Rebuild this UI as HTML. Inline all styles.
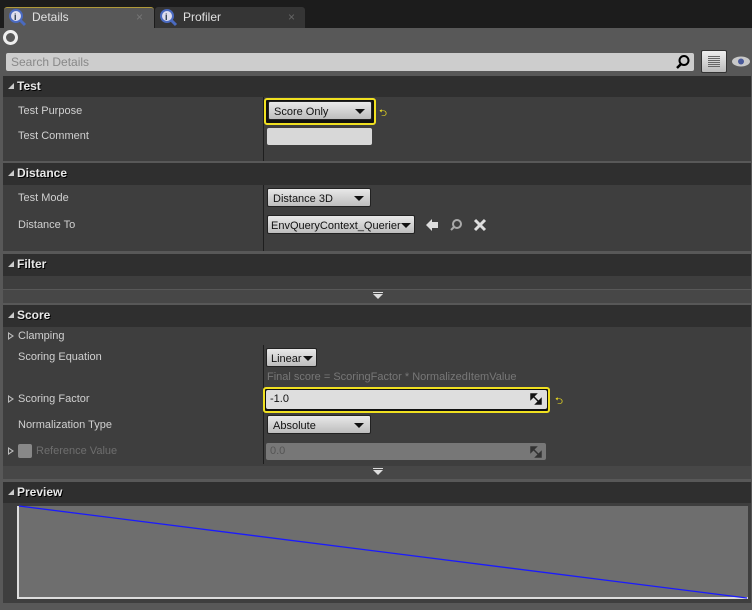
<!DOCTYPE html>
<html><head><style>
*{margin:0;padding:0;box-sizing:border-box}
body{width:752px;height:610px;background:#585858;font-family:"Liberation Sans",sans-serif;font-size:11px;color:#d8d8d8;position:relative;overflow:hidden}
.a{position:absolute}
.hdr{position:absolute;left:3px;right:1px;background:#2f2f2f;color:#e8e8e8;font-weight:bold;font-size:12px;padding-left:14px;line-height:21px;text-shadow:1px 1px 0 #000}
.hdr:before{content:"";position:absolute;left:5px;top:7px;border-left:6px solid transparent;border-bottom:6px solid #ccc}
.bd{position:absolute;left:3px;right:1px;background:#3e3e3e}
.lbl{position:absolute;left:18px;color:#d0d0d0;font-size:11px}
.dd{position:absolute;height:19px;background:linear-gradient(#e8e8e8,#bdbdbd);border:1px solid #222;border-radius:2px;color:#111;font-size:11px;line-height:18px;padding-left:5px;padding-top:1px}
.dd i{position:absolute;right:6px;top:7px;border-left:5px solid transparent;border-right:5px solid transparent;border-top:5px solid #111}
.vl{position:absolute;left:263px;width:1px;background:#1e1e1e}
.exp{position:absolute;left:3px;right:1px;background:#474747}
.exp i{position:absolute;left:370px;top:4px;border-left:5px solid transparent;border-right:5px solid transparent;border-top:5px solid #ddd}
.exp b{position:absolute;left:370px;top:2px;width:10px;height:1px;background:#ddd}
.tri{position:absolute;left:8px;border-top:4px solid transparent;border-bottom:4px solid transparent;border-left:6px solid #bbb}
.tri:after{content:"";position:absolute;left:-5px;top:-2px;border-top:2px solid transparent;border-bottom:2px solid transparent;border-left:3px solid #3e3e3e}
</style></head><body>
<div class="a" style="left:0;top:0;width:752px;height:28px;background:#1c1c1c"></div>
<div class="a" style="left:4px;top:7px;width:150px;height:21px;background:#585858;border-top:1px solid #b09a3a;border-radius:3px 3px 0 0"></div>
<div class="a" style="left:155px;top:7px;width:150px;height:21px;background:#353535;border-radius:3px 3px 0 0"></div>
<svg class="a" style="left:8px;top:8px" width="20" height="20"><circle cx="8" cy="8" r="6" fill="#dde" stroke="#4a6ac0" stroke-width="2"/><line x1="12" y1="12" x2="17" y2="17" stroke="#4a6ac0" stroke-width="3"/><text x="6" y="12" font-size="9" font-weight="bold" fill="#234">i</text></svg>
<svg class="a" style="left:159px;top:8px" width="20" height="20"><circle cx="8" cy="8" r="6" fill="#dde" stroke="#4a6ac0" stroke-width="2"/><line x1="12" y1="12" x2="17" y2="17" stroke="#4a6ac0" stroke-width="3"/><text x="6" y="12" font-size="9" font-weight="bold" fill="#234">i</text></svg>
<div class="a" style="left:32px;top:10px;font-size:12px;color:#e0e0e0">Details</div>
<div class="a" style="left:183px;top:10px;font-size:12px;color:#e0e0e0">Profiler</div>
<div class="a" style="left:136px;top:10px;color:#777;font-size:12px">×</div>
<div class="a" style="left:288px;top:10px;color:#666;font-size:12px">×</div>
<div class="a" style="left:3px;top:30px;width:15px;height:15px;border:3px solid #eee;border-radius:50%"></div>
<div class="a" style="left:6px;top:53px;width:688px;height:18px;background:#cdcdcd;border-radius:2px;color:#888;font-size:12px;line-height:18px;padding-left:5px">Search Details</div>
<svg class="a" style="left:675px;top:54px" width="16" height="16"><circle cx="9" cy="6.5" r="4.5" fill="none" stroke="#000" stroke-width="2"/><line x1="6" y1="10" x2="2" y2="14" stroke="#000" stroke-width="2.5"/></svg>
<div class="a" style="left:701px;top:50px;width:26px;height:23px;background:linear-gradient(#eee,#bbb);border:1px solid #333;border-radius:2px"></div>
<div class="a" style="left:708px;top:56px;width:12px;height:11px;background:repeating-linear-gradient(#666 0 1px,transparent 1px 2px)"></div>
<svg class="a" style="left:731px;top:55px" width="20" height="13"><ellipse cx="10" cy="6.5" rx="9" ry="5" fill="#c8c8c8"/><circle cx="10" cy="6.5" r="3" fill="#4a5a9a"/></svg>

<div class="hdr" style="top:76px;height:21px">Test</div>
<div class="bd" style="top:97px;height:64px"></div>
<div class="vl" style="top:97px;height:64px"></div>
<div class="lbl" style="top:105px">Test Purpose</div>
<div class="lbl" style="top:130px">Test Comment</div>
<div class="a" style="left:264px;top:98px;width:112px;height:27px;border:2px solid #f0e020;border-radius:3px;background:#111"></div>
<div class="dd" style="left:268px;top:101px;width:104px">Score Only<i></i></div>
<div class="a" style="left:379px;top:106px;color:#f0e020;font-size:10px">⮌</div>
<div class="a" style="left:267px;top:128px;width:105px;height:17px;background:#d8d8d8;border-radius:2px"></div>

<div class="hdr" style="top:163px;height:22px">Distance</div>
<div class="bd" style="top:185px;height:66px"></div>
<div class="vl" style="top:185px;height:66px"></div>
<div class="lbl" style="top:192px">Test Mode</div>
<div class="lbl" style="top:219px">Distance To</div>
<div class="dd" style="left:267px;top:188px;width:104px">Distance 3D<i></i></div>
<div class="dd" style="left:267px;top:215px;width:148px;padding-left:3px">EnvQueryContext_Querier<i style="right:3px"></i></div>
<svg class="a" style="left:424px;top:218px" width="70" height="14"><path d="M2 7 L8 1 L8 4 L14 4 L14 10 L8 10 L8 13 Z" fill="#ddd"/><circle cx="33" cy="6" r="4" fill="none" stroke="#aaa" stroke-width="2"/><line x1="30" y1="9" x2="27" y2="12" stroke="#aaa" stroke-width="2"/><path d="M51 2 L61 12 M61 2 L51 12" stroke="#ddd" stroke-width="3"/></svg>

<div class="hdr" style="top:254px;height:22px">Filter</div>
<div class="bd" style="top:276px;height:13px"></div>
<div class="exp" style="top:290px;height:13px"><b></b><i></i></div>

<div class="hdr" style="top:305px;height:22px">Score</div>
<div class="bd" style="top:327px;height:139px"></div>
<div class="vl" style="top:345px;height:119px"></div>
<div class="tri" style="top:332px"></div>
<div class="lbl" style="top:330px">Clamping</div>
<div class="lbl" style="top:351px">Scoring Equation</div>
<div class="dd" style="left:266px;top:348px;width:51px;padding-left:4px">Linear<i style="right:3px"></i></div>
<div class="a" style="left:267px;top:371px;color:#777;font-size:11px">Final score = ScoringFactor * NormalizedItemValue</div>
<div class="tri" style="top:395px"></div>
<div class="lbl" style="top:393px">Scoring Factor</div>
<div class="a" style="left:263px;top:387px;width:287px;height:26px;border:2px solid #f0e020;border-radius:3px;background:#111"></div>
<div class="a" style="left:266px;top:390px;width:281px;height:19px;background:#dedede;border-radius:2px;color:#111;line-height:19px;padding-left:4px">-1.0</div>
<svg class="a" style="left:530px;top:393px" width="12" height="12"><path d="M1 1 L6 1 L1 6 Z M11 11 L6 11 L11 6 Z M2 2 L10 10" stroke="#111" stroke-width="1.5" fill="#111"/></svg>
<div class="a" style="left:555px;top:394px;color:#f0e020;font-size:10px">⮌</div>
<div class="lbl" style="top:419px">Normalization Type</div>
<div class="dd" style="left:267px;top:415px;width:104px">Absolute<i></i></div>
<div class="tri" style="top:447px"></div>
<div class="a" style="left:18px;top:444px;width:14px;height:14px;background:#888;border-radius:2px"></div>
<div class="a" style="left:36px;top:445px;color:#6e6e6e">Reference Value</div>
<div class="a" style="left:266px;top:443px;width:280px;height:17px;background:#777;border-radius:2px;color:#555;line-height:17px;padding-left:4px">0.0</div>
<svg class="a" style="left:530px;top:446px" width="12" height="12"><path d="M1 1 L6 1 L1 6 Z M11 11 L6 11 L11 6 Z M2 2 L10 10" stroke="#333" stroke-width="1.5" fill="#333"/></svg>
<div class="exp" style="top:466px;height:13px"><b></b><i></i></div>

<div class="hdr" style="top:482px;height:21px">Preview</div>
<div class="bd" style="top:503px;height:100px"></div>
<div class="a" style="left:17px;top:506px;width:731px;height:93px;background:#6e6e6e;border-left:2px solid #ddd;border-bottom:2px solid #ddd"></div>
<svg class="a" style="left:17px;top:505px" width="731" height="94"><line x1="2" y1="1" x2="730" y2="93" stroke="#1a1aff" stroke-width="1.3"/></svg>
</body></html>
